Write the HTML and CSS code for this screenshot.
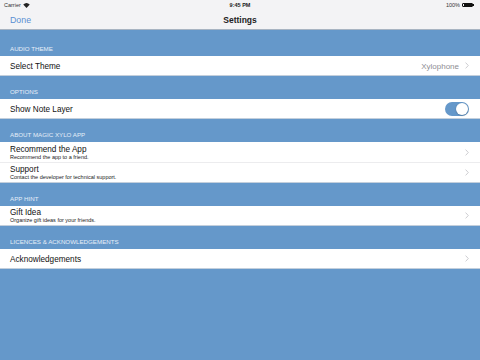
FILE: index.html
```html
<!DOCTYPE html>
<html>
<head>
<meta charset="utf-8">
<link rel="stylesheet" href="styles.css">
</head>
<body>
<div class="screen">
  <div class="status">
    <div class="status-left">Carrier
      <svg class="wifi" width="7" height="5" viewBox="0 0 14 10"><path d="M7 10 L0.5 3.2 A9.5 9.5 0 0 1 13.5 3.2 Z" fill="#222"/></svg>
    </div>
    <div class="status-time">9:45 PM</div>
    <div class="status-right">100%
      <span class="battery"><span class="battery-fill"></span></span><span class="battery-tip"></span>
    </div>
  </div>
  <div class="nav">
    <div class="nav-left">Done</div>
    <div class="nav-title">Settings</div>
    <div class="nav-right"></div>
  </div>

  <div class="section-header first">AUDIO THEME</div>
  <div class="group">
    <div class="row">
      <div class="row-text"><div class="title">Select Theme</div></div>
      <div class="detail">Xylophone</div>
      <svg class="chev" width="4" height="7" viewBox="0 0 4 7"><path d="M0.6 0.6 L3.3 3.5 L0.6 6.4" fill="none" stroke="#c7c7cc" stroke-width="0.9"/></svg>
    </div>
  </div>

  <div class="section-header">OPTIONS</div>
  <div class="group">
    <div class="row">
      <div class="row-text"><div class="title">Show Note Layer</div></div>
      <div class="toggle"><div class="knob"></div></div>
    </div>
  </div>

  <div class="section-header">ABOUT MAGIC XYLO APP</div>
  <div class="group">
    <div class="row">
      <div class="row-text"><div class="title">Recommend the App</div><div class="sub">Recommend the app to a friend.</div></div>
      <svg class="chev" width="4" height="7" viewBox="0 0 4 7"><path d="M0.6 0.6 L3.3 3.5 L0.6 6.4" fill="none" stroke="#c7c7cc" stroke-width="0.9"/></svg>
    </div>
    <div class="row">
      <div class="row-text"><div class="title">Support</div><div class="sub">Contact the developer for technical support.</div></div>
      <svg class="chev" width="4" height="7" viewBox="0 0 4 7"><path d="M0.6 0.6 L3.3 3.5 L0.6 6.4" fill="none" stroke="#c7c7cc" stroke-width="0.9"/></svg>
    </div>
  </div>

  <div class="section-header">APP HINT</div>
  <div class="group">
    <div class="row">
      <div class="row-text"><div class="title">Gift Idea</div><div class="sub">Organize gift ideas for your friends.</div></div>
      <svg class="chev" width="4" height="7" viewBox="0 0 4 7"><path d="M0.6 0.6 L3.3 3.5 L0.6 6.4" fill="none" stroke="#c7c7cc" stroke-width="0.9"/></svg>
    </div>
  </div>

  <div class="section-header">LICENCES &amp; ACKNOWLEDGEMENTS</div>
  <div class="group">
    <div class="row">
      <div class="row-text"><div class="title">Acknowledgements</div></div>
      <svg class="chev" width="4" height="7" viewBox="0 0 4 7"><path d="M0.6 0.6 L3.3 3.5 L0.6 6.4" fill="none" stroke="#c7c7cc" stroke-width="0.9"/></svg>
    </div>
  </div>
</div>
</body>
</html>
```
FILE: styles.css
```css
* { box-sizing: border-box; }
html, body { margin: 0; padding: 0; }
body {
  width: 480px;
  height: 360px;
  overflow: hidden;
  background: #6598ca;
  font-family: "Liberation Sans", Arial, sans-serif;
  color: #111;
}
.screen {
  display: flex;
  flex-direction: column;
  width: 480px;
  height: 360px;
}
.status {
  height: 10px;
  flex: none;
  background: #f3f3f5;
  display: flex;
  align-items: center;
  justify-content: space-between;
  padding: 0 6px 0 4px;
  font-size: 5.5px;
  color: #333;
  position: relative;
}
.status-left { display: flex; align-items: center; gap: 2px; }
.status-time {
  position: absolute;
  left: 0; right: 0;
  text-align: center;
  font-weight: bold;
  color: #222;
}
.status-right { display: flex; align-items: center; gap: 2px; }
.battery {
  width: 11px;
  height: 4.5px;
  border: 0.5px solid #111;
  border-radius: 1px;
  display: inline-block;
  padding: 0.5px;
}
.battery-fill { display: block; width: 100%; height: 100%; background: #111; }
.battery-tip { width: 1px; height: 2px; background: #111; margin-left: -2px; }
.nav {
  height: 20px;
  flex: none;
  background: #f3f3f5;
  display: flex;
  align-items: center;
  justify-content: space-between;
  padding: 0 10px;
  border-bottom: 0.5px solid #a8b4c2;
}
.nav-left {
  width: 60px;
  color: #5a8fd3;
  font-size: 8.8px;
}
.nav-title {
  font-size: 8.5px;
  font-weight: bold;
  color: #222;
}
.nav-right { width: 60px; }
.section-header {
  height: 23px;
  flex: none;
  padding: 0 10px 4px;
  display: flex;
  align-items: flex-end;
  font-size: 6.2px;
  color: #e6eef8;
}
.section-header.first { height: 26px; }
.group {
  background: #fff;
  flex: none;
}
.row {
  height: 20px;
  display: flex;
  align-items: center;
  padding: 0 10px;
  gap: 4px;
  border-bottom: 1px solid #c3cfdc;
}
.row + .row { border-top: 1px solid #ececee; height: 21px; }
.group .row:first-child:not(:last-child) { border-bottom: none; }
.row-text { flex: 1; display: flex; flex-direction: column; padding-top: 1px; }
.title { font-size: 8.2px; color: #111; line-height: 9px; }
.sub { font-size: 5.5px; color: #222; line-height: 6.5px; }
.detail { font-size: 8px; color: #8e8e93; padding-top: 1px; }
.chev { margin-left: 2px; margin-right: 1px; }
.toggle {
  width: 24px;
  height: 14px;
  border-radius: 7px;
  background: #6598ca;
  position: relative;
  margin-right: 1px;
}
.knob {
  position: absolute;
  right: 1px;
  top: 1px;
  width: 12px;
  height: 12px;
  border-radius: 50%;
  background: #fff;
  box-shadow: 0 0.5px 1.5px rgba(0,0,0,0.3);
}
```
